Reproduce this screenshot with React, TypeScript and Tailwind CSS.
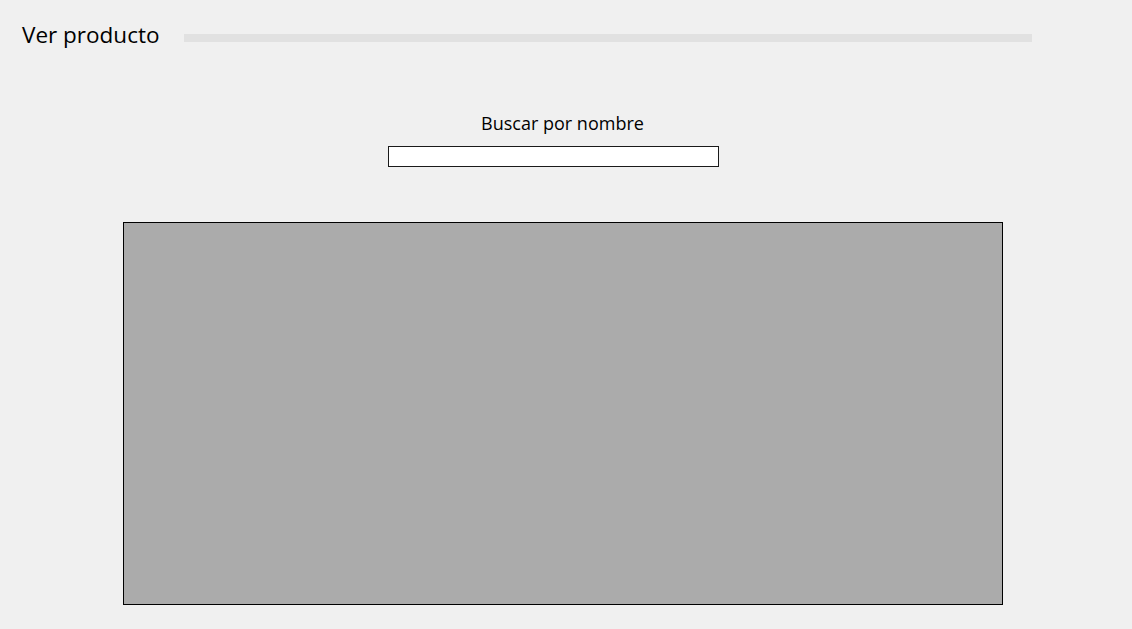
export default function App() {
  return (
    <div className="min-h-[629px] w-[1132px] bg-[#f0f0f0] font-['Open_Sans',sans-serif] text-black">
      <div className="flex items-start pl-[22px] pt-[18px]">
        <h1 className="mt-[1px] w-[137px] whitespace-nowrap text-[22.5px] leading-[32px]">Ver producto</h1>
        <div className="ml-[25px] mt-[16px] h-[8px] w-[848px] bg-[#e1e1e1]" />
      </div>

      <div className="mt-[59px] flex flex-col">
        <label className="ml-[472px] mt-[1px] w-[181px] text-center text-[18px] leading-[24px]">
          Buscar por nombre
        </label>
        <input
          type="text"
          className="ml-[388px] mt-[11px] h-[21px] w-[331px] border border-[#1a1a1a] bg-white outline-none"
        />
      </div>

      <div className="ml-[123px] mt-[55px] h-[383px] w-[880px] border border-black bg-[#ababab]" />
    </div>
  )
}
